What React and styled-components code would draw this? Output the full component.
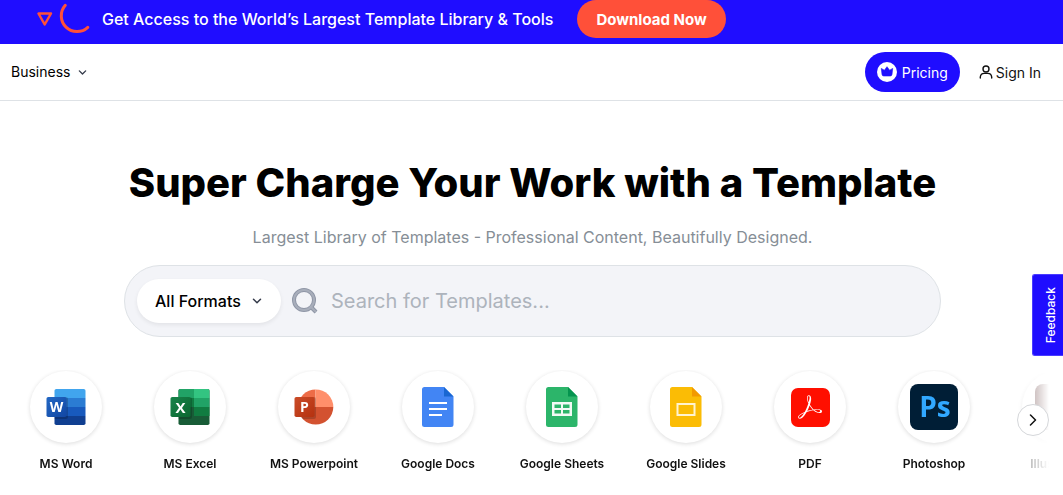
import React from "react";
import styled, { createGlobalStyle } from "styled-components";
import { SiAdobeacrobatreader } from "react-icons/si";

const GlobalStyle = createGlobalStyle`
  *, *::before, *::after { box-sizing: border-box; }
  body {
    margin: 0;
    background: #fff;
    color: #000;
    font-family: Inter, "Liberation Sans", sans-serif;
    overflow-x: hidden;
  }
  button, input, select { font-family: inherit; }
`;

const blue = "#1f0dff";
const coral = "#ff5039";

const Banner = styled.div`
  display: flex;
  align-items: flex-start;
  height: 44px;
  padding-left: 36px;
  background: ${blue};
  color: #fff;
`;

const BannerArt = styled.svg`
  flex: none;
  width: 56px;
  height: 36px;
`;

const BannerText = styled.p`
  margin: 0 24px 0 10px;
  font-size: 16px;
  font-weight: 500;
  line-height: 38px;
  white-space: nowrap;
`;

const DownloadButton = styled.button`
  flex: none;
  height: 38px;
  padding: 0 19px;
  border: 0;
  border-radius: 19px;
  background: ${coral};
  color: #fff;
  font-size: 15px;
  font-weight: 700;
`;

const Header = styled.header`
  display: flex;
  align-items: center;
  justify-content: space-between;
  height: 57px;
  padding: 0 22px 0 11px;
  border-bottom: 1px solid #dee2e6;
`;

const MenuButton = styled.button`
  display: flex;
  align-items: center;
  gap: 8px;
  padding: 0;
  border: 0;
  background: none;
  color: #000;
  font-size: 14px;
  line-height: 20px;
`;

const HeaderActions = styled.nav`
  display: flex;
  align-items: center;
  gap: 19px;
`;

const PricingLink = styled.a`
  display: flex;
  align-items: center;
  gap: 5px;
  height: 40px;
  padding: 0 12px;
  border-radius: 20px;
  background: ${blue};
  color: #fff;
  font-size: 14px;
  font-weight: 400;
  text-decoration: none;
`;

const SignInLink = styled.a`
  display: flex;
  align-items: center;
  gap: 3px;
  color: #111;
  font-size: 14px;
  text-decoration: none;
`;

const Hero = styled.section`
  display: flex;
  flex-direction: column;
  align-items: center;
  padding: 58px 22px 0 24px;
`;

const Title = styled.h1`
  margin: 0;
  font-size: 40px;
  font-weight: 800;
  line-height: 48px;
  text-align: center;
`;

const Subtitle = styled.p`
  margin: 18px 0 16px;
  color: #868e96;
  font-size: 16px;
  line-height: 24px;
  text-align: center;
`;

const SearchBar = styled.form`
  display: flex;
  align-items: center;
  width: 100%;
  max-width: 817px;
  height: 72px;
  padding: 0 24px 0 12px;
  border: 1px solid #dee2e6;
  border-radius: 36px;
  background: #f3f4f8;
`;

const FormatPicker = styled.label`
  display: grid;
  align-items: center;
  flex: none;
  margin-right: 11px;

  > * { grid-area: 1 / 1; }
  > svg { justify-self: end; margin-right: 19px; pointer-events: none; }
`;

const FormatSelect = styled.select`
  width: 144px;
  height: 44px;
  padding: 0 36px 0 18px;
  appearance: none;
  border: 0;
  border-radius: 22px;
  background: #fff;
  box-shadow: 0 2px 4px rgba(0, 0, 0, 0.07);
  color: #000;
  font-size: 16px;
  font-weight: 500;
`;

const SearchInput = styled.input`
  flex: 1;
  min-width: 0;
  height: 48px;
  margin-left: 13px;
  padding: 0;
  border: 0;
  background: transparent;
  font-size: 20px;
  &::placeholder { color: #adb3bc; opacity: 1; }
`;

const Carousel = styled.section`
  display: grid;
  margin: 33px 14px 0 4px;
  overflow: hidden;

  > * { grid-area: 1 / 1; }
`;

const Formats = styled.ul`
  display: flex;
  min-width: 0;
  margin: 0;
  padding: 0 0 16px;
  overflow: hidden;
  list-style: none;
  mask-image: linear-gradient(to right, #000 calc(100% - 60px), transparent 100%);
`;

const Format = styled.li`
  flex: none;
  width: 124px;
`;

const FormatLink = styled.a`
  display: flex;
  flex-direction: column;
  align-items: center;
  gap: 12px;
  color: #111;
  font-size: 12px;
  font-weight: 600;
  line-height: 16px;
  text-decoration: none;
`;

const Disc = styled.span`
  display: flex;
  align-items: center;
  justify-content: center;
  width: 72px;
  height: 72px;
  margin: 1px;
  border-radius: 50%;
  background: #fff;
  box-shadow: 0 1px 4px rgba(0, 0, 0, 0.14);
`;

const NextButton = styled.button`
  display: flex;
  align-items: center;
  justify-content: center;
  align-self: start;
  justify-self: end;
  z-index: 1;
  width: 32px;
  height: 32px;
  margin-top: 34px;
  padding: 0;
  border: 1px solid #d5d7da;
  border-radius: 50%;
  background: #fff;
  color: #111;
`;

const Feedback = styled.button`
  position: fixed;
  top: 274px;
  right: 0;
  width: 31px;
  height: 82px;
  padding: 4px 0 0 6px;
  border: 1px solid #4a3cff;
  border-right: 0;
  border-radius: 3px 0 0 3px;
  background: ${blue};
  color: #fff;

  span {
    display: inline-block;
    writing-mode: vertical-rl;
    transform: rotate(180deg);
    font-size: 12px;
    font-weight: 500;
    line-height: 16px;
  }
`;

const AcrobatTile = styled.span`
  display: flex;
  align-items: center;
  justify-content: center;
  width: 39px;
  height: 39px;
  border-radius: 7px;
  background: #ff0f00;
  color: #fff;
`;

const Chevron = ({ color = "#343a4a", size = 9 }) => (
  <svg width={size} height={size} viewBox="0 0 10 10" fill="none" aria-hidden="true">
    <path d="M1.5 3.2 5 6.7 8.5 3.2" stroke={color} strokeWidth="1.5" strokeLinecap="round" strokeLinejoin="round" />
  </svg>
);

const CrownIcon = () => (
  <svg width="20" height="20" viewBox="0 0 20 20" aria-hidden="true">
    <circle cx="10" cy="10" r="10" fill="#fff" />
    <path d="M4.3 6.4 7.4 8.2 10 4.7 12.6 8.2 15.7 6.4 15 12.4Q14.8 14 13.2 14H6.8Q5.2 14 5 12.4Z" fill={blue} stroke={blue} strokeWidth=".6" strokeLinejoin="round" />
  </svg>
);

const UserIcon = () => (
  <svg width="14" height="14" viewBox="0 0 14 14" fill="none" stroke="#111" strokeWidth="1.4" strokeLinecap="round" aria-hidden="true">
    <circle cx="7" cy="4" r="3" />
    <path d="M1.3 13V12a4 4 0 0 1 4-3.6h3.4a4 4 0 0 1 4 3.6v1" />
  </svg>
);

const SearchIcon = () => (
  <svg width="26" height="26" viewBox="0 0 26 26" fill="none" aria-hidden="true">
    <circle cx="12" cy="12" r="10" stroke="#8f96a6" strokeWidth="4" />
    <path d="M18 18 24 24" stroke="#8f96a6" strokeWidth="4" />
    <circle cx="12" cy="12" r="10" stroke="#a8aebb" strokeWidth="2" />
    <path d="M18 18 24 24" stroke="#a8aebb" strokeWidth="2" />
  </svg>
);

const Letter = ({ x, y, size, fill = "#fff", weight = 700, children }) => (
  <text x={x} y={y} fontSize={size} fill={fill} fontWeight={weight} textAnchor="middle" fontFamily='"Open Sans", "Noto Sans", sans-serif'>
    {children}
  </text>
);

const WordIcon = () => (
  <svg width="40" height="36" viewBox="0 0 40 36" aria-hidden="true">
    <defs>
      <clipPath id="word-sheet"><rect x="8.5" width="31" height="36" rx="1.8" /></clipPath>
      <linearGradient id="word-tile" x2="1" y2="1"><stop stopColor="#2368c4" /><stop offset="1" stopColor="#1146a3" /></linearGradient>
    </defs>
    <g clipPath="url(#word-sheet)">
      <path fill="#41a5ee" d="M8 0h32v9H8z" />
      <path fill="#2b7cd3" d="M8 9h32v9H8z" />
      <path fill="#185abd" d="M8 18h32v9H8z" />
      <path fill="#103f91" d="M8 27h32v9H8z" />
      <rect x="5" y="8" width="17" height="22" rx="2" fill="#000" opacity=".18" />
    </g>
    <rect x=".5" y="8" width="20" height="20" rx="1.8" fill="url(#word-tile)" />
    <Letter x="10.5" y="23" size="14">W</Letter>
  </svg>
);

const ExcelIcon = () => (
  <svg width="40" height="36" viewBox="0 0 40 36" aria-hidden="true">
    <defs>
      <clipPath id="excel-sheet"><rect x="8.5" width="31" height="36" rx="1.8" /></clipPath>
      <linearGradient id="excel-tile" x2="1" y2="1"><stop stopColor="#18834a" /><stop offset="1" stopColor="#0b6731" /></linearGradient>
    </defs>
    <g clipPath="url(#excel-sheet)">
      <path fill="#185c37" d="M8 0h32v36H8z" />
      <path fill="#21a366" d="M8 0h16v9H8z" />
      <path fill="#33c481" d="M24 0h16v9H24z" />
      <path fill="#107c41" d="M8 9h16v9H8zM24 18h16v9H24z" />
      <path fill="#21a366" d="M24 9h16v9H24z" />
      <rect x="5" y="8" width="17" height="22" rx="2" fill="#000" opacity=".18" />
    </g>
    <rect x=".5" y="8" width="20" height="20" rx="1.8" fill="url(#excel-tile)" />
    <Letter x="10.5" y="23.5" size="15">X</Letter>
  </svg>
);

const PowerpointIcon = () => (
  <svg width="40" height="36" viewBox="0 0 40 36" aria-hidden="true">
    <defs>
      <clipPath id="ppt-disc"><circle cx="21.7" cy="18" r="17.6" /></clipPath>
      <linearGradient id="ppt-tile" x2="1" y2="1"><stop stopColor="#ca4c28" /><stop offset="1" stopColor="#b5310f" /></linearGradient>
    </defs>
    <g clipPath="url(#ppt-disc)">
      <path fill="#ed6c47" d="M0 0h21.5v18H0z" />
      <path fill="#ff8f6b" d="M21.5 0H40v18H21.5z" />
      <path fill="#d35230" d="M0 18h40v18H0z" />
      <rect x="3" y="8" width="19" height="22" rx="2" fill="#000" opacity=".18" />
    </g>
    <rect x=".5" y="8" width="20" height="20" rx="1.8" fill="url(#ppt-tile)" />
    <Letter x="10.5" y="23" size="14">P</Letter>
  </svg>
);

const SheetOfPaper = ({ color, fold, children }) => (
  <svg width="32" height="40" viewBox="0 0 32 40" aria-hidden="true">
    <path fill={color} d="M2.5 0H22l9.5 9.5v28a2.5 2.5 0 0 1-2.5 2.5H2.5A2.5 2.5 0 0 1 0 37.5v-35A2.5 2.5 0 0 1 2.5 0Z" />
    <path fill={fold} d="M22 0l9.5 9.5H22z" />
    {children}
  </svg>
);

const DocsIcon = () => (
  <SheetOfPaper color="#4285f4" fold="#1967d2">
    <path fill="#fff" d="M7 15h18v2H7zM7 21h18v2H7zM7 27h13v2H7z" />
  </SheetOfPaper>
);

const SheetsIcon = () => (
  <SheetOfPaper color="#2cb56a" fold="#05944f">
    <path fill="#f1faf4" fillRule="evenodd" d="M6 15h20v14H6zM8.5 17.5V21H15v-3.5zM17 17.5V21h6.500v-3.500zM8.500 23v3.500H15V23zM17 23v3.500h6.500V23z" />
  </SheetOfPaper>
);

const SlidesIcon = () => (
  <SheetOfPaper color="#fbbc05" fold="#f29900">
    <rect x="7.500" y="17" width="17" height="11" fill="none" stroke="#fff3d0" strokeWidth="2" />
  </SheetOfPaper>
);

const PdfIcon = () => (
  <AcrobatTile>
    <SiAdobeacrobatreader size={24} aria-hidden="true" />
  </AcrobatTile>
);

const PhotoshopIcon = () => (
  <svg width="48" height="46" viewBox="0 0 48 46" aria-hidden="true">
    <rect width="48" height="46" rx="8" fill="#001e36" />
    <Letter x="25" y="33" size="28" weight="700" fill="#31a8ff">Ps</Letter>
  </svg>
);

const IllustratorIcon = () => (
  <svg width="48" height="46" viewBox="0 0 48 46" aria-hidden="true">
    <rect x="1" width="47" height="46" rx="8" fill="#330000" />
  </svg>
);

const formats = [
  ["MS Word", WordIcon],
  ["MS Excel", ExcelIcon],
  ["MS Powerpoint", PowerpointIcon],
  ["Google Docs", DocsIcon],
  ["Google Sheets", SheetsIcon],
  ["Google Slides", SlidesIcon],
  ["PDF", PdfIcon],
  ["Photoshop", PhotoshopIcon],
  ["Illustrator", IllustratorIcon],
];

export default function App() {
  return (
    <>
      <GlobalStyle />
      <Banner>
        <BannerArt viewBox="0 0 56 36" fill="none" stroke={coral} strokeLinecap="round" strokeLinejoin="round" aria-hidden="true">
          <path d="M2.500 13.500H15L8.700 24.500Z" strokeWidth="2.500" />
          <path d="M29.300 5.300A15.750 15.750 0 0 0 51.800 27.300" strokeWidth="3" />
        </BannerArt>
        <BannerText>Get Access to the World’s Largest Template Library &amp; Tools</BannerText>
        <DownloadButton type="button">Download Now</DownloadButton>
      </Banner>
      <Header>
        <MenuButton type="button">
          Business
          <Chevron />
        </MenuButton>
        <HeaderActions>
          <PricingLink href="#pricing">
            <CrownIcon />
            Pricing
          </PricingLink>
          <SignInLink href="#sign-in">
            <UserIcon />
            Sign In
          </SignInLink>
        </HeaderActions>
      </Header>
      <main>
        <Hero>
          <Title>Super Charge Your Work with a Template</Title>
          <Subtitle>Largest Library of Templates - Professional Content, Beautifully Designed.</Subtitle>
          <SearchBar role="search">
            <FormatPicker>
              <FormatSelect aria-label="Format" defaultValue="All Formats">
                <option>All Formats</option>
              </FormatSelect>
              <Chevron size={10} />
            </FormatPicker>
            <SearchIcon />
            <SearchInput type="text" aria-label="Search for templates" placeholder="Search for Templates..." />
          </SearchBar>
        </Hero>
        <Carousel aria-label="Formats">
          <Formats>
            {formats.map(([name, Icon]) => (
              <Format key={name}>
                <FormatLink href="#formats">
                  <Disc>
                    <Icon />
                  </Disc>
                  {name}
                </FormatLink>
              </Format>
            ))}
          </Formats>
          <NextButton type="button" aria-label="Next formats">
            <svg width="12" height="12" viewBox="0 0 12 12" fill="none" aria-hidden="true">
              <path d="M3.500 1 8.500 6 3.500 11" stroke="currentColor" strokeWidth="1.500" strokeLinecap="round" strokeLinejoin="round" />
            </svg>
          </NextButton>
        </Carousel>
      </main>
      <Feedback type="button">
        <span>Feedback</span>
      </Feedback>
    </>
  );
}
